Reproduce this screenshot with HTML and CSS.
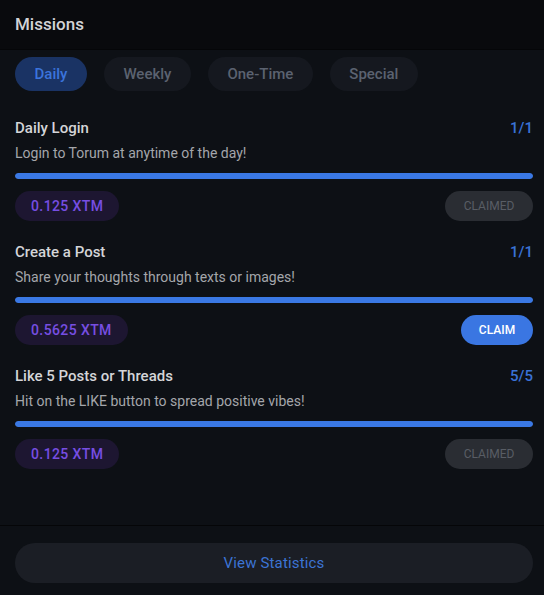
FILE: index.html
```html
<!DOCTYPE html>
<html>
  <head>
    <meta charset="UTF-8">
    <title>Missions</title>
    <link rel="stylesheet" href="styles.css">
  </head>
  <body>
    <div class="panel">
      <div class="panel-header">Missions</div>

      <div class="panel-body">
        <div class="tabs">
          <div class="tab active">Daily</div>
          <div class="tab">Weekly</div>
          <div class="tab">One-Time</div>
          <div class="tab">Special</div>
        </div>

        <div class="mission">
          <div class="mission-top">
            <span class="mission-title">Daily Login</span>
            <span class="mission-count">1/1</span>
          </div>
          <div class="mission-desc">Login to Torum at anytime of the day!</div>
          <div class="progress"><div class="progress-fill" style="width: 100%"></div></div>
          <div class="mission-bottom">
            <span class="reward">0.125 XTM</span>
            <button class="btn claimed">CLAIMED</button>
          </div>
        </div>

        <div class="mission">
          <div class="mission-top">
            <span class="mission-title">Create a Post</span>
            <span class="mission-count">1/1</span>
          </div>
          <div class="mission-desc">Share your thoughts through texts or images!</div>
          <div class="progress"><div class="progress-fill" style="width: 100%"></div></div>
          <div class="mission-bottom">
            <span class="reward">0.5625 XTM</span>
            <button class="btn claim">CLAIM</button>
          </div>
        </div>

        <div class="mission">
          <div class="mission-top">
            <span class="mission-title">Like 5 Posts or Threads</span>
            <span class="mission-count">5/5</span>
          </div>
          <div class="mission-desc">Hit on the LIKE button to spread positive vibes!</div>
          <div class="progress"><div class="progress-fill" style="width: 100%"></div></div>
          <div class="mission-bottom">
            <span class="reward">0.125 XTM</span>
            <button class="btn claimed">CLAIMED</button>
          </div>
        </div>
      </div>

      <div class="panel-footer">
        <button class="stats-btn">View Statistics</button>
      </div>
    </div>
  </body>
</html>
```

FILE: styles.css
```css
body, html {
  margin: 0;
}

body {
  background: #0d1015;
  font-family: Roboto, "Liberation Sans", sans-serif;
}

.panel {
  display: flex;
  flex-direction: column;
  height: 595px;
}

.panel-header {
  background: #090a0d;
  color: #d2d3d6;
  font-size: 17px;
  font-weight: 500;
  line-height: 20px;
  padding: 14px 15px 15px;
  border-bottom: 1px solid #050608;
}

.panel-body {
  flex: 1;
  padding: 7px 11px 0 15px;
}

.tabs {
  display: flex;
  gap: 17px;
  margin-bottom: 27px;
}

.tab {
  height: 34px;
  line-height: 34px;
  padding: 0 19.5px;
  border-radius: 17px;
  background: #15181f;
  color: #5b6270;
  font-size: 15px;
  font-weight: 500;
}

.tab.active {
  background: #1a3364;
  color: #3b74dc;
}

.mission {
  margin-bottom: 21px;
}

.mission-top {
  display: flex;
  justify-content: space-between;
  line-height: 20px;
  font-size: 15px;
  font-weight: 500;
}

.mission-title {
  color: #d4d5d8;
}

.mission-count {
  color: #3a72d6;
}

.mission-desc {
  margin-top: 5px;
  line-height: 20px;
  font-size: 14px;
  color: #a4a6ab;
}

.progress {
  margin-top: 10px;
  height: 6px;
  border-radius: 3px;
  background: #1c2029;
  overflow: hidden;
}

.progress-fill {
  height: 100%;
  border-radius: 3px;
  background: #3a78e4;
}

.mission-bottom {
  margin-top: 12px;
  display: flex;
  justify-content: space-between;
  align-items: center;
  height: 30px;
}

.reward {
  height: 30px;
  line-height: 30px;
  padding: 0 16px;
  border-radius: 15px;
  background: #1d1631;
  color: #774ee2;
  font-size: 14px;
  font-weight: 500;
  letter-spacing: 0.4px;
}

.btn {
  height: 30px;
  border: none;
  border-radius: 15px;
  font-family: inherit;
  font-size: 12px;
}

.btn.claimed {
  width: 88px;
  background: #2a2d33;
  color: #595d65;
}

.btn.claim {
  width: 72px;
  background: #3a76e2;
  color: #ffffff;
  font-weight: 500;
}

.panel-footer {
  border-top: 1px solid #050608;
  padding: 17px 11px 12px 15px;
}

.stats-btn {
  display: block;
  width: 100%;
  height: 40px;
  border: none;
  border-radius: 20px;
  background: #1b1e25;
  color: #3c74d4;
  font-family: inherit;
  font-size: 15px;
  letter-spacing: 0.15px;
}
```
